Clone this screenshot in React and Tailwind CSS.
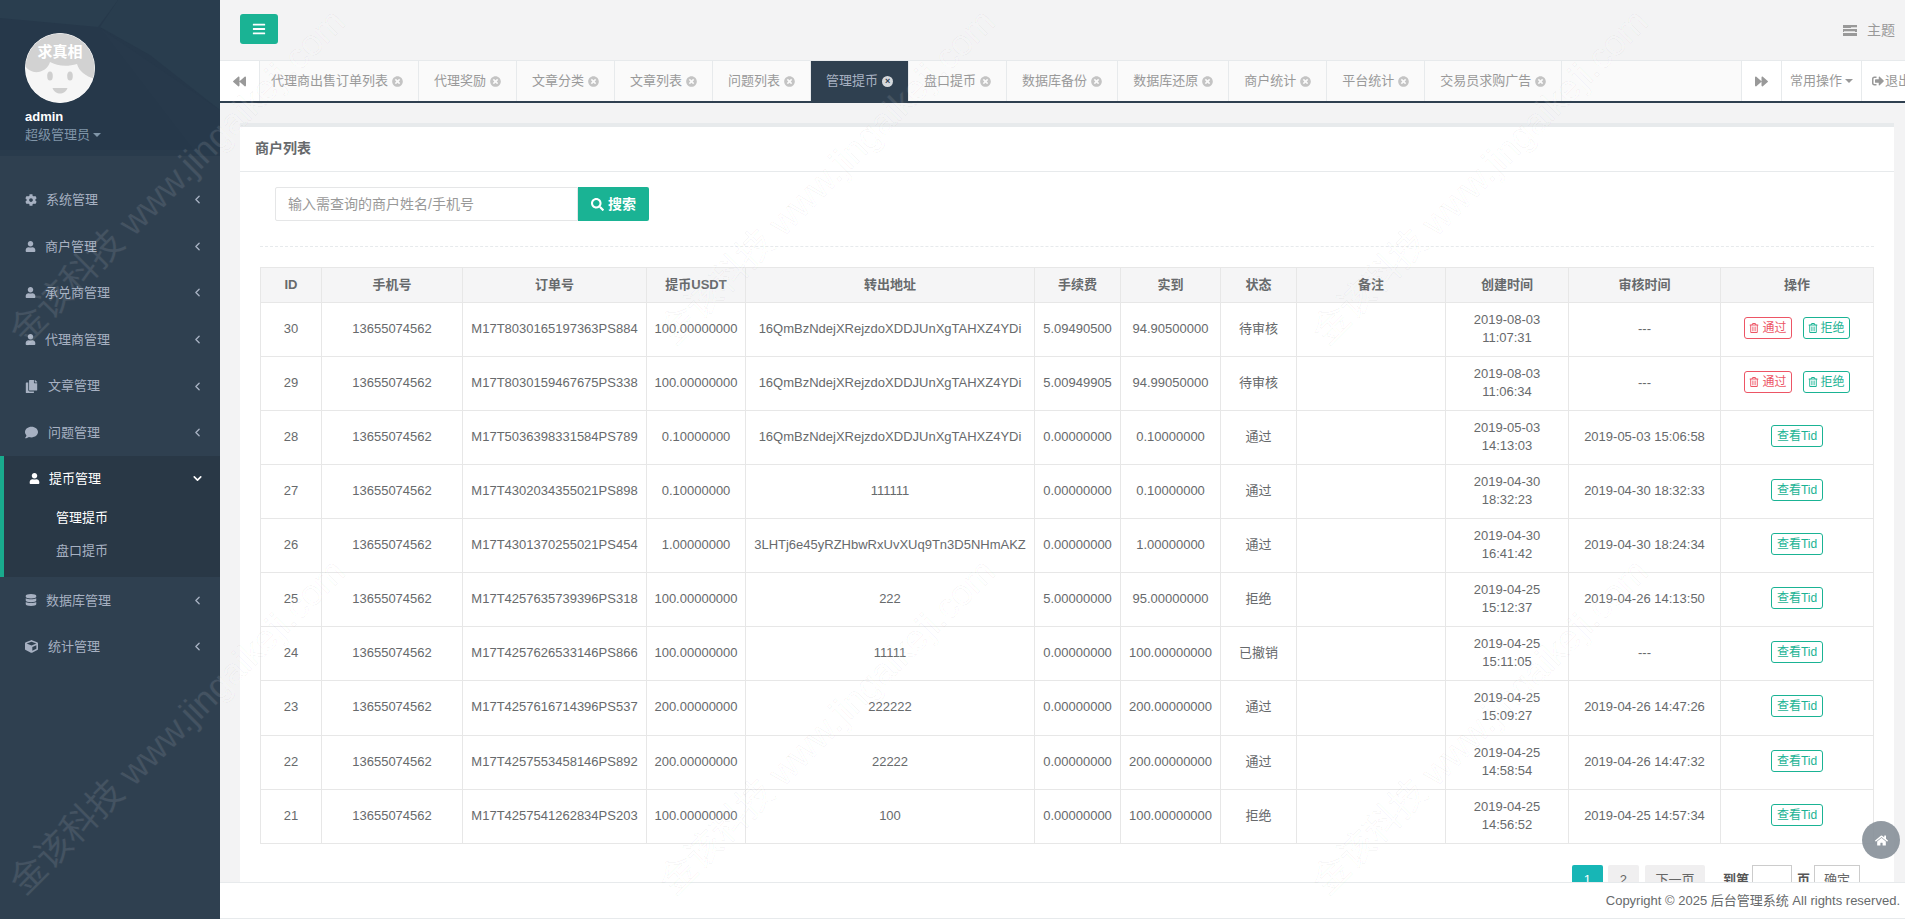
import React from "react";
import {
  FaBackward, FaBars, FaCog, FaComment, FaCopy, FaCube, FaDatabase, FaForward,
  FaHome, FaRegTrashAlt, FaSearch, FaSignOutAlt, FaTimesCircle, FaUser,
} from "react-icons/fa";
import { FiChevronDown, FiChevronLeft } from "react-icons/fi";

const addrA = "16QmBzNdejXRejzdoXDDJUnXgTAHXZ4YDi";
const addrB = "3LHTj6e45yRZHbwRxUvXUq9Tn3D5NHmAKZ";
const phone = "13655074562";

const rows = [
  ["30", "M17T8030165197363PS884", "100.00000000", addrA, "5.09490500", "94.90500000", "待审核", "2019-08-03 11:07:31", "---"],
  ["29", "M17T8030159467675PS338", "100.00000000", addrA, "5.00949905", "94.99050000", "待审核", "2019-08-03 11:06:34", "---"],
  ["28", "M17T5036398331584PS789", "0.10000000", addrA, "0.00000000", "0.10000000", "通过", "2019-05-03 14:13:03", "2019-05-03 15:06:58"],
  ["27", "M17T4302034355021PS898", "0.10000000", "111111", "0.00000000", "0.10000000", "通过", "2019-04-30 18:32:23", "2019-04-30 18:32:33"],
  ["26", "M17T4301370255021PS454", "1.00000000", addrB, "0.00000000", "1.00000000", "通过", "2019-04-30 16:41:42", "2019-04-30 18:24:34"],
  ["25", "M17T4257635739396PS318", "100.00000000", "222", "5.00000000", "95.00000000", "拒绝", "2019-04-25 15:12:37", "2019-04-26 14:13:50"],
  ["24", "M17T4257626533146PS866", "100.00000000", "11111", "0.00000000", "100.00000000", "已撤销", "2019-04-25 15:11:05", "---"],
  ["23", "M17T4257616714396PS537", "200.00000000", "222222", "0.00000000", "200.00000000", "通过", "2019-04-25 15:09:27", "2019-04-26 14:47:26"],
  ["22", "M17T4257553458146PS892", "200.00000000", "22222", "0.00000000", "200.00000000", "通过", "2019-04-25 14:58:54", "2019-04-26 14:47:32"],
  ["21", "M17T4257541262834PS203", "100.00000000", "100", "0.00000000", "100.00000000", "拒绝", "2019-04-25 14:56:52", "2019-04-25 14:57:34"],
];

const headers = ["ID", "手机号", "订单号", "提币USDT", "转出地址", "手续费", "实到", "状态", "备注", "创建时间", "审核时间", "操作"];

const tabs = ["代理商出售订单列表", "代理奖励", "文章分类", "文章列表", "问题列表", "管理提币", "盘口提币", "数据库备份", "数据库还原", "商户统计", "平台统计", "交易员求购广告"];

const menuTop = [
  { label: "系统管理", icon: <FaCog size={12} />, gap: "w-[21px]" },
  { label: "商户管理", icon: <FaUser size={11} />, gap: "w-[20px]" },
  { label: "承兑商管理", icon: <FaUser size={11} />, gap: "w-[20px]" },
  { label: "代理商管理", icon: <FaUser size={11} />, gap: "w-[20px]" },
  { label: "文章管理", icon: <FaCopy size={13} />, gap: "w-[23px]" },
  { label: "问题管理", icon: <FaComment size={13} />, gap: "w-[23px]" },
];

const menuBottom = [
  { label: "数据库管理", icon: <FaDatabase size={12} />, gap: "w-[21px]" },
  { label: "统计管理", icon: <FaCube size={13} />, gap: "w-[23px]" },
];

function MenuItem({ label, icon, gap }) {
  return (
    <div className="flex h-[46.6px] items-center pl-[25px] pr-[16px] text-[#a7b1c2]">
      <span className={`${gap} shrink-0`}>{icon}</span>
      <span className="flex-1">{label}</span>
      <FiChevronLeft size={13} strokeWidth={2.5} />
    </div>
  );
}

function Avatar() {
  return (
    <svg width="70" height="70" viewBox="0 0 70 70">
      <defs>
        <clipPath id="avatar-clip">
          <circle cx="35" cy="35" r="34.5" />
        </clipPath>
      </defs>
      <circle cx="35" cy="35" r="35" fill="#fff" />
      <g clipPath="url(#avatar-clip)">
        <rect width="70" height="70" fill="#f6f6f6" />
        <path d="M0 0H70V46C60 43 54 38 52 31C42 34 32 33 25 29C23 36 16 40 9 39C5 38 2 36 0 33Z" fill="#d2d2d2" />
      </g>
      <ellipse cx="25" cy="43" rx="2.8" ry="4.6" fill="#cfcfcf" />
      <ellipse cx="45" cy="43" rx="2.8" ry="4.6" fill="#cfcfcf" />
      <path d="M27.5 55H42.5C41 59 38 60.5 35 60.5C32 60.5 29 59 27.5 55Z" fill="#cfcfcf" />
      <text x="35" y="24" textAnchor="middle" fontSize="15" fontWeight="700" fill="#fff">求真相</text>
    </svg>
  );
}

function Sidebar() {
  return (
    <aside className="h-full w-[220px] shrink-0 bg-[#2f4050] text-[13px]">
      <div className="relative h-[156px] overflow-hidden bg-[#25384a]">
        <svg className="absolute inset-0" width="220" height="156" viewBox="0 0 220 156">
          <path d="M0 0H220V156H0Z" fill="#26384a" />
          <path d="M0 0H118L98 27L0 18Z" fill="#2a3e4f" />
          <path d="M118 0H220V110L150 55L100 27Z" fill="#293d4e" />
          <path d="M220 110V156H198L100 28Z" fill="#27394b" />
          <path d="M0 150H220V156H0Z" fill="#293b4c" />
        </svg>
        <div className="relative pl-[25px] pt-[33px]">
          <Avatar />
          <div className="mt-[5px] font-bold leading-[18px] text-white">admin</div>
          <div className="flex items-center leading-[18px] text-[#8095a8]">
            超级管理员
            <span className="ml-[3px] h-0 w-0 border-x-[4px] border-t-[4px] border-x-transparent border-t-[#8095a8]" />
          </div>
        </div>
      </div>
      <nav className="pt-[20.5px]">
        {menuTop.map((m) => (
          <MenuItem key={m.label} {...m} />
        ))}
        <div className="h-[121px] border-l-4 border-[#19aa8d] bg-[#293846]">
          <div className="flex h-[45px] items-center pl-[25px] pr-[16px] text-white">
            <span className="w-[20px] shrink-0">
              <FaUser size={11} />
            </span>
            <span className="flex-1">提币管理</span>
            <FiChevronDown size={13} strokeWidth={3} />
          </div>
          <div className="pl-[52px] leading-[33px]">
            <div className="h-[33px] text-white">管理提币</div>
            <div className="h-[33px] text-[#a7b1c2]">盘口提币</div>
          </div>
        </div>
        {menuBottom.map((m) => (
          <MenuItem key={m.label} {...m} />
        ))}
      </nav>
    </aside>
  );
}

function Tab({ label, active }) {
  return (
    <div
      className={`flex h-[40px] shrink-0 items-center gap-[4px] border-r border-[#e7eaec] px-[15px] ${
        active ? "bg-[#2f4050] text-[#a7b1c2]" : "text-[#999]"
      }`}
    >
      {label}
      {active ? (
        <span className="relative flex h-[11px] w-[11px] items-center justify-center rounded-full bg-[#d5d9dd] text-[9px] font-bold leading-none text-[#2f4050]">
          ×
        </span>
      ) : (
        <FaTimesCircle size={11} className="text-[#c4c4c4]" />
      )}
    </div>
  );
}

function TabBar() {
  return (
    <div className="flex h-[43px] shrink-0 border-t border-[#e7eaec] border-b-2 border-b-[#2f4050] bg-white text-[13px]">
      <div className="z-10 flex w-[40px] shrink-0 items-center justify-center border-r border-[#e7eaec] bg-white text-[#999]">
        <FaBackward size={13} />
      </div>
      <div className="flex min-w-0 flex-1 overflow-hidden bg-[#fafafa]">
        <div className="-ml-[4px] flex">
          {tabs.map((t) => (
            <Tab key={t} label={t} active={t === "管理提币"} />
          ))}
        </div>
      </div>
      <div className="flex w-[40px] shrink-0 items-center justify-center border-l border-[#e7eaec] text-[#999]">
        <FaForward size={13} />
      </div>
      <div className="flex w-[80px] shrink-0 items-center justify-center gap-[3px] border-l border-[#e7eaec] text-[#999]">
        常用操作
        <span className="h-0 w-0 border-x-[4px] border-t-[4px] border-x-transparent border-t-[#999]" />
      </div>
      <div className="flex w-[44px] shrink-0 items-center gap-[1px] overflow-hidden border-l border-[#e7eaec] pl-[10px] whitespace-nowrap text-[#999]">
        <FaSignOutAlt size={12} className="shrink-0" />
        退出
      </div>
    </div>
  );
}

function ActionCell({ status }) {
  if (status === "待审核") {
    return (
      <div className="flex justify-center gap-[11px] pb-[2px]">
        <span className="flex h-[22px] items-center gap-[3px] rounded-[3px] border border-[#ed5565] px-[4px] text-[12px] text-[#ed5565]">
          <FaRegTrashAlt size={10} />
          通过
        </span>
        <span className="flex h-[22px] items-center gap-[3px] rounded-[3px] border border-[#1ab394] px-[4px] text-[12px] text-[#1ab394]">
          <FaRegTrashAlt size={10} />
          拒绝
        </span>
      </div>
    );
  }
  return (
    <div className="flex justify-center pb-[2px]">
      <span className="flex h-[22px] items-center rounded-[3px] border border-[#1ab394] px-[5px] text-[12px] text-[#1ab394]">
        查看Tid
      </span>
    </div>
  );
}

function DataTable() {
  const td = "border border-[#e7e7e7] px-2 pb-[2px] text-center align-middle leading-[18px]";
  return (
    <table className="w-[1613px] table-fixed border-collapse text-[13px] text-[#676a6c]">
      <colgroup>
        <col className="w-[61px]" />
        <col className="w-[141px]" />
        <col className="w-[184px]" />
        <col className="w-[99px]" />
        <col className="w-[289px]" />
        <col className="w-[86px]" />
        <col className="w-[100px]" />
        <col className="w-[76px]" />
        <col className="w-[149px]" />
        <col className="w-[123px]" />
        <col className="w-[152px]" />
        <col className="w-[153px]" />
      </colgroup>
      <thead>
        <tr className="h-[35px] bg-[#f5f5f6]">
          {headers.map((h) => (
            <th key={h} className="border border-[#e7e7e7] px-1 text-center align-middle font-bold">
              {h}
            </th>
          ))}
        </tr>
      </thead>
      <tbody>
        {rows.map((r) => (
          <tr key={r[0]} className={r[0] === "23" ? "h-[55px]" : "h-[54px]"}>
            <td className={td}>{r[0]}</td>
            <td className={td}>{phone}</td>
            <td className={`${td} !px-0`}>{r[1]}</td>
            <td className={`${td} !px-0`}>{r[2]}</td>
            <td className={`${td} !px-0`}>{r[3]}</td>
            <td className={td}>{r[4]}</td>
            <td className={`${td} !px-0`}>{r[5]}</td>
            <td className={td}>{r[6]}</td>
            <td className={td}></td>
            <td className={td}>{r[7]}</td>
            <td className={td}>{r[8]}</td>
            <td className={td}>
              <ActionCell status={r[6]} />
            </td>
          </tr>
        ))}
      </tbody>
    </table>
  );
}

function Pagination() {
  return (
    <div className="mt-[21px] flex items-start justify-end pr-[14px] text-[13px] text-[#666]">
      <span className="flex h-[30px] w-[31px] items-center justify-center rounded-[2px] bg-[#17b6b6] text-white">1</span>
      <span className="ml-[5px] flex h-[30px] w-[31px] items-center justify-center rounded-[2px] bg-[#f0eff0]">2</span>
      <span className="ml-[6px] flex h-[30px] w-[60px] items-center justify-center rounded-[2px] bg-[#f0eff0]">下一页</span>
      <span className="ml-[18px] flex h-[30px] items-center font-bold text-[#555]">到第</span>
      <span className="ml-[3px] h-[30px] w-[40px] border border-[#ccc] bg-white" />
      <span className="ml-[5px] flex h-[30px] items-center font-bold text-[#555]">页</span>
      <span className="ml-[4px] flex h-[30px] w-[46px] items-center justify-center border border-[#ccc] bg-white">确定</span>
    </div>
  );
}

function Watermarks() {
  const cls =
    "absolute origin-left -rotate-45 whitespace-nowrap text-[36px] leading-none text-white/10 [-webkit-text-stroke:0.5px_rgba(0,0,0,0.07)]";
  const label = "金该科技 www.jingaikeji.com";
  return (
    <div className="pointer-events-none absolute inset-0 z-40 overflow-hidden">
      <div className={`${cls} left-[16px] top-[320px]`}>{label}</div>
      <div className={`${cls} left-[16px] top-[870px]`}>{label}</div>
      <div className={`${cls} left-[666px] top-[320px]`}>{label}</div>
      <div className={`${cls} left-[666px] top-[870px]`}>{label}</div>
      <div className={`${cls} left-[1319px] top-[320px]`}>{label}</div>
      <div className={`${cls} left-[1319px] top-[870px]`}>{label}</div>
    </div>
  );
}

export default function App() {
  return (
    <div className="relative flex h-[919px] w-[1905px] overflow-hidden bg-[#f3f3f4] font-['Liberation_Sans','Noto_Sans_CJK_SC',sans-serif]">
      <Sidebar />
      <div className="flex h-full min-w-0 flex-1 flex-col">
        <div className="flex h-[60px] shrink-0 items-center justify-between pl-[20px] pr-[10px]">
          <button className="mb-[2px] flex h-[30px] w-[38px] items-center justify-center rounded-[3px] bg-[#1ab394] text-white">
            <FaBars size={14} />
          </button>
          <div className="flex items-center gap-[10px] text-[14px] text-[#999]">
            <svg width="14" height="11" viewBox="0 0 14 11">
              <rect width="14" height="3" fill="#999" />
              <rect y="4" width="14" height="3" fill="#999" />
              <rect y="8" width="14" height="3" fill="#999" />
              <rect x="8" y="2" width="6" height="1" fill="#d8d8d8" />
              <rect x="1" y="6" width="11" height="1" fill="#d8d8d8" />
            </svg>
            主题
          </div>
        </div>
        <TabBar />
        <div className="min-h-0 flex-1 overflow-hidden pl-[20px] pr-[11px] pt-[20px]">
          <div className="border-t-4 border-[#e7eaec] bg-white">
            <div className="h-[45px] border-b border-[#e7eaec] pl-[15px] text-[14px] font-bold leading-[42px] text-[#676a6c]">
              商户列表
            </div>
            <div className="px-[20px] pt-[15px]">
              <div className="flex pl-[15px]">
                <div className="flex h-[34px] w-[303px] items-center rounded-l-[2px] border border-[#e5e6e7] bg-white pl-[12px] text-[14px] text-[#999]">
                  输入需查询的商户姓名/手机号
                </div>
                <button className="flex h-[34px] w-[71px] items-center justify-center gap-[4px] rounded-r-[2px] bg-[#1ab394] text-[14px] font-bold text-white">
                  <FaSearch size={13} />
                  搜索
                </button>
              </div>
              <div className="mb-[20px] mt-[25px] h-px border-t border-dashed border-[#e7eaec]" />
              <DataTable />
              <Pagination />
            </div>
          </div>
        </div>
        <div className="h-[37px] shrink-0 border-y border-[#e7eaec] bg-white pr-[5px] text-right text-[13px] leading-[35px] text-[#676a6c]">
          Copyright © 2025 后台管理系统 All rights reserved.
        </div>
      </div>
      <div className="absolute left-[1862px] top-[821px] z-30 flex h-[38px] w-[38px] items-center justify-center rounded-full bg-[#868f98]/90 text-white">
        <FaHome size={13} />
      </div>
      <Watermarks />
    </div>
  );
}
